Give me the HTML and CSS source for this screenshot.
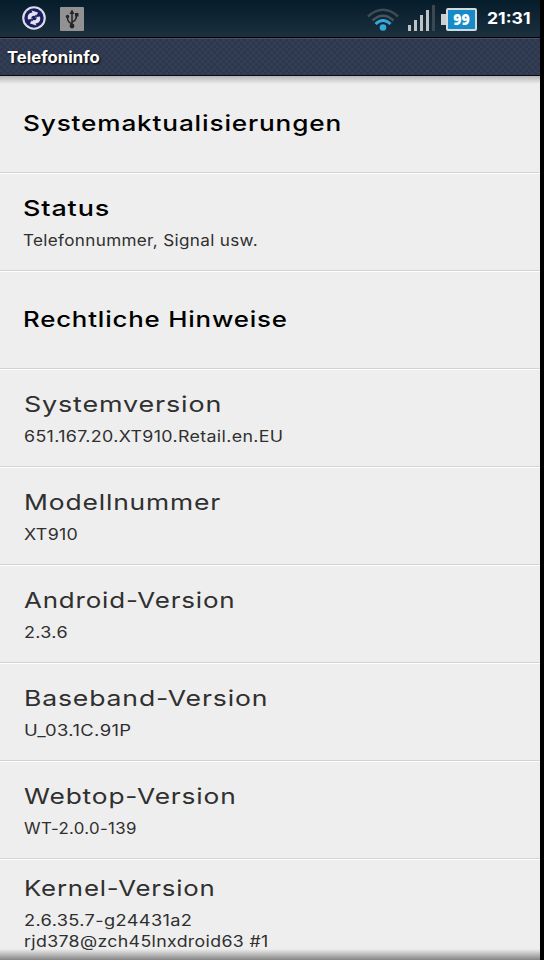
FILE: index.html
```html
<!DOCTYPE html>
<html lang="de">
<head>
<meta charset="utf-8">
<title>Telefoninfo</title>
<link rel="stylesheet" href="styles.css">
</head>
<body>
<div class="phone">
  <header class="status-bar">
    <svg class="sync" viewBox="0 0 24 24"><circle cx="12" cy="12" r="11.8" fill="#dcdde8"/><circle cx="12" cy="12" r="9.700" fill="#191d62"/><g fill="#e2e2ee"><path d="M6 13.500C5 9.500 7 6.500 10.500 6.500L9.500 4.500 16 6.500 13.500 12 12.500 9.700C10 9.500 9 11 9.500 13z"/><path d="M6 13.500C5 9.500 7 6.500 10.500 6.500L9.500 4.500 16 6.500 13.500 12 12.500 9.700C10 9.500 9 11 9.500 13z" transform="rotate(180 12 12)"/></g><path d="M14.500 9L9.500 15" stroke="#191d62" stroke-width="1.200"/></svg>
    <svg class="usb" viewBox="0 0 24 24"><rect width="24" height="24" rx="1" fill="#929292"/><g fill="none" stroke="#242424" stroke-width="1.5"><path d="M12 19V5M12 16.500Q7.500 15.500 7.500 11V9M12 15Q16.500 14 16.500 8"/></g><path d="M12 2.500L9.500 7h5zM15 6h3.500v3.500H15z" fill="#242424"/><circle cx="7.500" cy="9.500" r="1.700" fill="#242424"/><circle cx="12" cy="19" r="2.400" fill="#242424"/></svg>
    <svg class="wifi" viewBox="0 0 32 24"><g fill="none"><path d="M1 8.500Q16-5 31 8.500" stroke="#3f4b52" stroke-width="2.500"/><path d="M5.500 12.500Q16 3 26.500 12.500" stroke="#46545c" stroke-width="2.500"/><path d="M8.500 16Q16 9 23.500 16" stroke="#36a9dc" stroke-width="3"/></g><circle cx="16" cy="19.500" r="3.300" fill="#36a9dc"/></svg>
    <svg class="signal" viewBox="0 0 28 27"><path d="M0 20h3v6H0zM6 15h3v11H6zM12 10h3v16h-3zM18 5h3v21h-3z" fill="#bfc3c6"/><path d="M24 0h3v26h-3z" fill="#3c4850"/></svg>
    <div class="battery"><i class="tip"></i><span class="cell"><b>99</b></span></div>
    <span class="clock fit" data-width="44">21:31</span>
  </header>
  <div class="title-bar"><h1 class="fit" data-width="93">Telefoninfo</h1></div>
  <main class="list">
    <section class="row single active"><h2 class="fit" data-width="319">Systemaktualisierungen</h2></section>
    <section class="row active"><h2 class="fit" data-width="87">Status</h2><p class="fit" data-width="235">Telefonnummer, Signal usw.</p></section>
    <section class="row single active"><h2 class="fit" data-width="265">Rechtliche Hinweise</h2></section>
    <section class="row"><h2 class="fit" data-width="198">Systemversion</h2><p class="fit" data-width="260">651.167.20.XT910.Retail.en.EU</p></section>
    <section class="row"><h2 class="fit" data-width="197">Modellnummer</h2><p class="fit" data-width="54">XT910</p></section>
    <section class="row"><h2 class="fit" data-width="211">Android-Version</h2><p class="fit" data-width="44">2.3.6</p></section>
    <section class="row"><h2 class="fit" data-width="244">Baseband-Version</h2><p class="fit" data-width="107">U_03.1C.91P</p></section>
    <section class="row"><h2 class="fit" data-width="213">Webtop-Version</h2><p class="fit" data-width="113">WT-2.0.0-139</p></section>
    <section class="row kernel"><h2 class="fit" data-width="192">Kernel-Version</h2><p class="fit" data-width="168">2.6.35.7-g24431a2</p><p class="fit" data-width="245">rjd378@zch45lnxdroid63 #1</p></section>
  </main>
</div>
<script src="script.js"></script>
</body>
</html>
```
FILE: script.js
```js
// Widen each label to its design width.
document.querySelectorAll('.fit').forEach(function (el) {
  el.style.transform = 'scaleX(' + Number(el.dataset.width) / el.offsetWidth + ')';
});
```
FILE: styles.css
```css
* { box-sizing: border-box; }
body { margin: 0; background: #000; }
h1, h2, p { margin: 0; }
.phone {
  width: 540px;
  height: 960px;
  overflow: hidden;
  display: flex;
  flex-direction: column;
  font-family: Inter, "DejaVu Sans", sans-serif;
  background: #eee;
}
.fit {
  width: max-content;
  white-space: nowrap;
  transform-origin: 0 50%;
}
.status-bar {
  height: 38px;
  flex: none;
  display: flex;
  align-items: flex-start;
  padding-left: 22px;
  background: linear-gradient(#051c2b, #1c303e);
  border-bottom: 1px solid #000;
}
.sync { width: 24px; height: 24px; margin-top: 6px; }
.usb { width: 24px; height: 24px; margin: 7px 0 0 14px; }
.wifi { width: 32px; height: 24px; margin: 8px 0 0 283px; }
.signal { width: 28px; height: 27px; margin: 5px 0 0 9px; }
.battery { display: flex; align-items: center; margin: 8px 0 0 5px; }
.tip { width: 5px; height: 11px; background: #c9ced1; }
.cell {
  width: 31px;
  height: 23px;
  border: 2px solid #d3dadd;
  border-radius: 2px;
  background: #168bc9;
  color: #fff;
  font: bold 16px/19px "Open Sans", sans-serif;
  display: flex;
  justify-content: center;
}
.cell b { transform: scaleX(.88); }
.clock {
  margin: 7px 0 0 10px;
  color: #fff;
  font-size: 16px;
  font-weight: 700;
  line-height: 22px;
}
.title-bar {
  height: 38px;
  flex: none;
  padding: 7px 0 0 7px;
  border-top: 1px solid #46526a;
  border-bottom: 1px solid #080b12;
  background: repeating-conic-gradient(#2d384e 0 25%, #333e55 0 50%) 0 0 / 6px 6px;
}
h1 {
  color: #fff;
  font-size: 16px;
  font-weight: 700;
  line-height: 22px;
  text-shadow: 1px 1px 2px #000;
}
.list {
  flex: 1;
  position: relative;
  color: #303030;
}
.list::before, .list::after {
  content: "";
  position: absolute;
  left: 0;
  right: 0;
}
.list::before { top: 0; height: 8px; background: linear-gradient(#b5b5b5, #eee0); }
.list::after { top: 873px; height: 11px; background: linear-gradient(#eee0, #858585); }
.row {
  height: 98px;
  padding: 19px 0 0 24px;
  border-bottom: 1px solid #fff;
  box-shadow: inset 0 -1px #d2d2d2;
}
.row.active { padding-left: 23px; }
.row.single { padding-top: 32px; }
.row.kernel { padding-top: 13px; height: 118px; }
h2 {
  font-size: 22px;
  line-height: 30px;
  font-weight: 400;
  letter-spacing: .7px;
}
.active h2 { color: #000; font-weight: 500; }
p {
  margin-top: 7px;
  font-size: 15.5px;
  line-height: 21px;
  letter-spacing: .3px;
}
p + p { margin-top: 0; }
```
